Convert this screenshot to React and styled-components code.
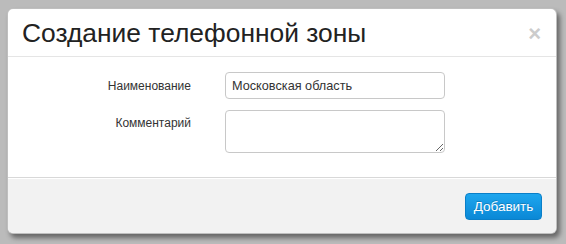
import React from "react";
import styled, { createGlobalStyle } from "styled-components";

const Global = createGlobalStyle`
  html, body { margin: 0; padding: 0; }
  body {
    background: #bbbbbb;
    font-family: "Liberation Sans", Arial, sans-serif;
    width: 566px;
    height: 244px;
    overflow: hidden;
  }
`;

const Page = styled.div`
  padding: 8px 9px 10px 7px;
`;

const Modal = styled.div`
  width: 550px;
  height: 226px;
  box-sizing: border-box;
  background: #fff;
  border: 1px solid rgba(0, 0, 0, 0.25);
  border-radius: 6px;
  box-shadow: 3px 4px 5px rgba(0, 0, 0, 0.45);
  display: flex;
  flex-direction: column;
  overflow: hidden;
`;

const Header = styled.div`
  height: 48px;
  flex-shrink: 0;
  box-sizing: border-box;
  padding: 0 15px 0 14px;
  border-bottom: 1px solid #e5e5e5;
  display: flex;
  align-items: center;
  justify-content: space-between;
`;

const Title = styled.h3`
  margin: 0;
  font-family: "Liberation Sans", Arial, sans-serif;
  font-weight: normal;
  font-size: 26.4px;
  line-height: 30px;
  color: #222;
`;

const Close = styled.button`
  border: 0;
  background: none;
  padding: 0;
  margin-top: 2px;
  font-family: "Liberation Sans", Arial, sans-serif;
  font-size: 22px;
  font-weight: bold;
  line-height: 20px;
  color: #cccccc;
  cursor: pointer;
`;

const Body = styled.div`
  flex: 1;
  padding: 15px 15px 0 15px;
`;

const Form = styled.div`
  display: grid;
  grid-template-columns: 168px 220px;
  column-gap: 34px;
  row-gap: 11px;
`;

const Label = styled.label`
  text-align: right;
  font-size: 12px;
  color: #333;
  padding-top: ${(p) => p.$top}px;
`;

const Input = styled.input`
  box-sizing: border-box;
  width: 220px;
  height: 27px;
  padding: 0 6px;
  border: 1px solid #c8c8c8;
  border-radius: 4px;
  font-family: "Liberation Sans", Arial, sans-serif;
  font-size: 12.7px;
  color: #333;
  outline: none;
`;

const Textarea = styled.textarea`
  box-sizing: border-box;
  width: 220px;
  height: 43px;
  padding: 4px 6px;
  border: 1px solid #c8c8c8;
  border-radius: 4px;
  font-family: "Liberation Sans", Arial, sans-serif;
  font-size: 13px;
  display: block;
  outline: none;
`;

const Footer = styled.div`
  height: 56px;
  flex-shrink: 0;
  box-sizing: border-box;
  background: #f2f2f2;
  border-top: 1px solid #d8d8d8;
  box-shadow: inset 0 1px 0 #fff;
  padding: 15px 14px 0 0;
  display: flex;
  justify-content: flex-end;
  align-items: flex-start;
`;

const PrimaryButton = styled.button`
  width: 77px;
  height: 27px;
  border: 1px solid #0a7fc8;
  border-radius: 4px;
  background: linear-gradient(#1ea6ee, #0a88d6);
  color: #fff;
  font-family: "Liberation Sans", Arial, sans-serif;
  font-size: 13.5px;
  text-shadow: 0 -1px 0 rgba(0, 0, 0, 0.2);
  padding: 0;
  cursor: pointer;
`;

export default function App() {
  return (
    <>
      <Global />
      <Page>
        <Modal>
          <Header>
            <Title>Создание телефонной зоны</Title>
            <Close>×</Close>
          </Header>
          <Body>
            <Form>
              <Label $top={7}>Наименование</Label>
              <Input defaultValue="Московская область" />
              <Label $top={6}>Комментарий</Label>
              <Textarea />
            </Form>
          </Body>
          <Footer>
            <PrimaryButton>Добавить</PrimaryButton>
          </Footer>
        </Modal>
      </Page>
    </>
  );
}
